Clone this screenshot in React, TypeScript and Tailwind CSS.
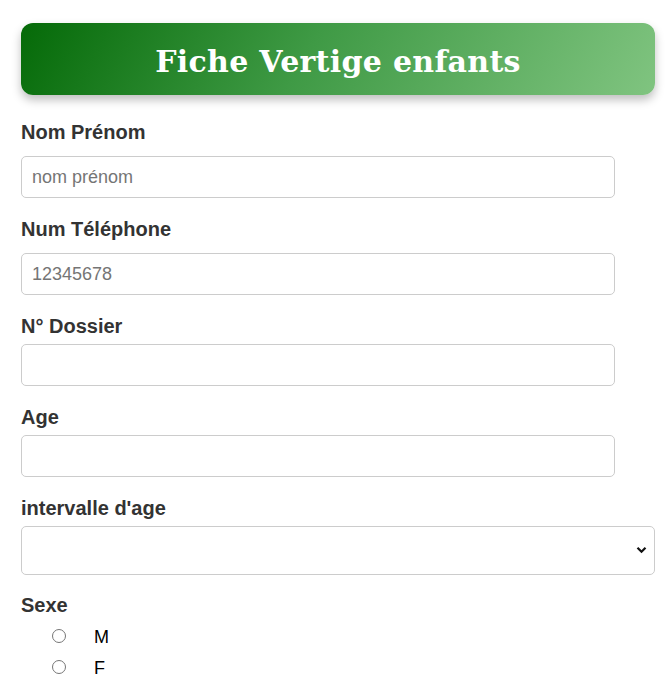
import React from "react";

const labelCls =
  "block text-[20px] leading-[24px] font-bold text-[#333333] font-['Liberation_Sans',Arial,sans-serif]";
const inputCls =
  "block w-[594px] h-[42px] border border-[#cccccc] rounded-[5px] px-[10px] text-[18px] text-[#333] placeholder:text-[#757575] font-['Liberation_Sans',Arial,sans-serif] bg-white outline-none";

function Field({
  label,
  placeholder,
  gap,
}: {
  label: string;
  placeholder?: string;
  gap: string;
}) {
  return (
    <div className="flex flex-col mb-[19px]">
      <label className={`${labelCls} ${gap}`}>{label}</label>
      <input className={inputCls} placeholder={placeholder} />
    </div>
  );
}

export default function App() {
  return (
    <div className="min-h-[691px] bg-white px-[21px] pt-[23px] font-['Liberation_Sans',Arial,sans-serif]">
      <div className="w-[634px]">
        <div className="h-[72px] rounded-[12px] bg-[linear-gradient(120deg,#056a08_0%,#3f9a45_45%,#80c480_100%)] shadow-[0_5px_10px_rgba(0,0,0,0.25)] flex items-center justify-center">
          <h1 className="pt-[5px] text-white font-bold text-[30px] leading-none tracking-[0.3px] font-['DejaVu_Serif',Georgia,serif]">
            Fiche Vertige enfants
          </h1>
        </div>

        <div className="mt-[25px]">
          <Field label="Nom Prénom" placeholder="nom prénom" gap="mb-[12px]" />
          <Field label="Num Téléphone" placeholder="12345678" gap="mb-[12px]" />
          <Field label="N° Dossier" gap="mb-[6px]" />
          <Field label="Age" gap="mb-[6px]" />

          <div className="flex flex-col mb-[18px]">
            <label className={`${labelCls} mb-[6px]`}>intervalle d'age</label>
            <div className="relative w-[634px] h-[49px]">
              <select className="appearance-none w-full h-full border border-[#cccccc] rounded-[5px] px-[10px] text-[18px] bg-white outline-none">
                <option value=""></option>
              </select>
              <svg
                className="absolute right-[8px] top-[20px] pointer-events-none"
                width="11"
                height="8"
                viewBox="0 0 11 8"
              >
                <path
                  d="M1.5 1.8 L5.5 5.8 L9.5 1.8"
                  fill="none"
                  stroke="#111"
                  strokeWidth="2.2"
                />
              </svg>
            </div>
          </div>

          <div className="flex flex-col">
            <label className={labelCls}>Sexe</label>
            <div className="mt-[3px] pl-[31px] flex flex-col">
              {["M", "F"].map((v) => (
                <div key={v} className="h-[31px] flex items-center">
                  <span className="w-[14px] h-[14px] rounded-full border border-[#767676] bg-white box-border" />
                  <span className="ml-[28px] mt-[4px] text-[18px] leading-[21px] text-black">
                    {v}
                  </span>
                </div>
              ))}
            </div>
          </div>
        </div>
      </div>
    </div>
  );
}
